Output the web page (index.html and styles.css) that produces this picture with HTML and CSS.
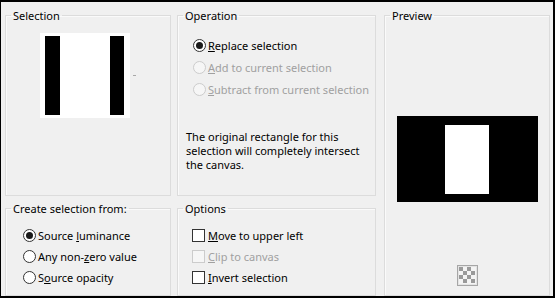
FILE: index.html
```html
<!DOCTYPE html>
<html>
<head>
<meta charset="utf-8">
<link rel="stylesheet" href="styles.css">
</head>
<body>
<div class="window">
  <fieldset class="group g-sel">
    <legend>Selection</legend>
    <div class="thumbrow">
      <div class="thumb">
        <div class="bar bar-l"></div>
        <div class="mid"></div>
        <div class="bar bar-r"></div>
      </div>
      <span class="dash"></span>
    </div>
  </fieldset>

  <fieldset class="group g-op">
    <legend>Operation</legend>
    <div class="list list-op">
      <div class="row"><span class="radio on"></span><span class="lbl"><u>R</u>eplace selection</span></div>
      <div class="row dis"><span class="radio"></span><span class="lbl"><u>A</u>dd to current selection</span></div>
      <div class="row dis"><span class="radio"></span><span class="lbl"><u>S</u>ubtract from current selection</span></div>
    </div>
    <p class="note">The original rectangle for this<br>selection will completely intersect<br>the canvas.</p>
  </fieldset>

  <fieldset class="group g-prev">
    <legend>Preview</legend>
    <div class="prevbox">
      <div class="previnner"></div>
    </div>
    <svg class="checker" width="21" height="21" viewBox="0 0 21 21">
      <rect x="0.5" y="0.5" width="20" height="20" fill="#e4e4e4" stroke="#a6a6a6"/>
      <rect x="2" y="2" width="17" height="17" fill="#f4f4f4"/>
      <g fill="#9a9a9a">
        <rect x="2" y="2" width="4" height="4"/>
        <rect x="10" y="2" width="4" height="4"/>
        <rect x="6" y="6" width="4" height="4"/>
        <rect x="14" y="6" width="4" height="4"/>
        <rect x="2" y="10" width="4" height="4"/>
        <rect x="10" y="10" width="4" height="4"/>
        <rect x="6" y="14" width="4" height="4"/>
        <rect x="14" y="14" width="4" height="4"/>
      </g>
    </svg>
  </fieldset>

  <fieldset class="group g-create">
    <legend>Create selection from:</legend>
    <div class="list list-bottom">
      <div class="row"><span class="radio on"></span><span class="lbl">Source <u>l</u>uminance</span></div>
      <div class="row"><span class="radio"></span><span class="lbl">Any non-<u>z</u>ero value</span></div>
      <div class="row"><span class="radio"></span><span class="lbl">S<u>o</u>urce opacity</span></div>
    </div>
  </fieldset>

  <fieldset class="group g-options">
    <legend>Options</legend>
    <div class="list list-bottom list-check">
      <div class="row"><span class="check"></span><span class="lbl"><u>M</u>ove to upper left</span></div>
      <div class="row dis"><span class="check"></span><span class="lbl"><u>C</u>lip to canvas</span></div>
      <div class="row"><span class="check"></span><span class="lbl"><u>I</u>nvert selection</span></div>
    </div>
  </fieldset>
</div>
</body>
</html>
```

FILE: styles.css
```css
html, body {
  margin: 0;
  padding: 0;
  background: #f0f0f0;
}

.window {
  box-sizing: border-box;
  width: 555px;
  height: 298px;
  border-style: solid;
  border-color: #000;
  border-width: 2px 2px 2px 1px;
  padding: 6px 3px 0 4px;
  background: #f0f0f0;
  display: grid;
  grid-template-columns: 166px 199px 168px;
  grid-template-rows: 188px 95px;
  column-gap: 6px;
  row-gap: 5px;
  font-family: "Noto Sans", "Open Sans", sans-serif;
  font-size: 11px;
  color: #000;
}

.group {
  box-sizing: border-box;
  margin: 0;
  padding: 0;
  min-width: 0;
  border: 1px solid #dcdcdc;
  box-shadow: inset 1px 1px 0 #fafafa;
}

.group legend {
  padding: 0 2px;
  margin-left: 5px;
  line-height: 15px;
}

.g-sel { grid-column: 1; grid-row: 1; }
.g-op { grid-column: 2; grid-row: 1; }
.g-prev { grid-column: 3; grid-row: 1 / 3; margin-left: 2px; display: flex; flex-direction: column; align-items: center; }
.g-create { grid-column: 1; grid-row: 2; }
.g-options { grid-column: 2; grid-row: 2; }

/* Selection thumbnail */
.thumbrow {
  display: flex;
  align-items: center;
  margin: 10px 0 0 34px;
}

.thumb {
  box-sizing: border-box;
  width: 90px;
  height: 85px;
  background: #fff;
  padding: 3px 6px 3px 5px;
  display: flex;
}

.bar { background: #000; height: 79px; }
.bar-l { width: 15px; }
.bar-r { width: 14px; }
.mid { width: 50px; height: 79px; background: #fff; }

.dash {
  width: 3px;
  height: 1px;
  background: #a8a8a8;
  margin-left: 3px;
}

/* Lists */
.list { display: flex; flex-direction: column; }
.row {
  display: flex;
  align-items: center;
  height: 22px;
}
.list-op { margin: 11px 0 0 15px; }
.list-bottom { margin: 9px 0 0 17px; }
.list-bottom .row { height: 21px; }
.list-check { margin-left: 14px; }

.lbl { white-space: nowrap; line-height: 15px; }
.lbl u { text-underline-offset: 1px; }

.radio {
  box-sizing: border-box;
  width: 13px;
  height: 13px;
  border: 1px solid #333;
  border-radius: 50%;
  background: #fff;
  margin-right: 2px;
  display: flex;
  align-items: center;
  justify-content: center;
  flex: none;
}
.radio.on::after {
  content: "";
  width: 7px;
  height: 7px;
  border-radius: 50%;
  background: #1a1a1a;
}

.check {
  box-sizing: border-box;
  width: 13px;
  height: 13px;
  border: 1px solid #333;
  background: #fff;
  margin-right: 3px;
  flex: none;
}

.dis .lbl { color: #a0a0a0; }
.dis .radio { border-color: #cccccc; background: #f6f6f6; }
.dis .check { border-color: #cccccc; background: #f6f6f6; }

.note {
  margin: 30px 0 0 8px;
  line-height: 14px;
}

/* Preview */
.prevbox {
  width: 141px;
  height: 86px;
  background: #000;
  margin-top: 93px;
  display: flex;
  align-items: center;
  justify-content: center;
}
.previnner {
  width: 44px;
  height: 69px;
  background: #fff;
}
.checker {
  display: block;
  margin-top: 63px;
}
```
